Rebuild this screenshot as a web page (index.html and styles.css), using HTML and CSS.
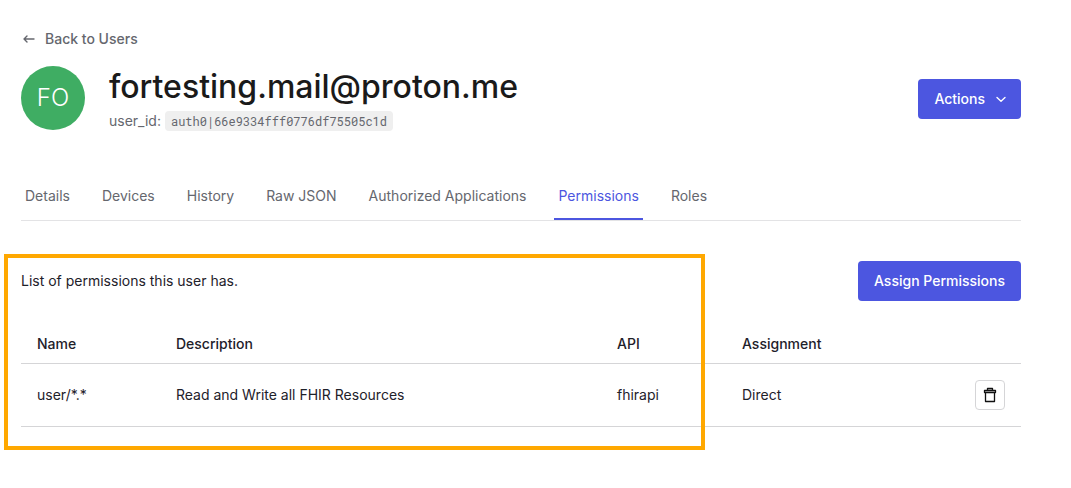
FILE: index.html
```html
<!DOCTYPE html>
<html lang="en">
<head>
<meta charset="utf-8">
<meta name="viewport" content="width=device-width, initial-scale=1">
<title>User permissions</title>
<link rel="stylesheet" href="styles.css">
</head>
<body>
<main class="page">
  <a class="back" href="#">
    <svg class="back-icon" width="16" height="16" viewBox="0 0 16 16" fill="none" stroke="currentColor" stroke-width="1.4" stroke-linecap="round" stroke-linejoin="round" aria-hidden="true"><path d="M13 8H3M6 5 3 8l3 3"/></svg>
    Back to Users
  </a>
  <header class="user">
    <div class="avatar">FO</div>
    <div class="identity">
      <h1 class="email">fortesting.mail@proton.me</h1>
      <div class="user-id">user_id: <code class="code">auth0|66e9334fff0776df75505c1d</code></div>
    </div>
    <button class="button button-menu" type="button">Actions
      <svg class="button-icon" width="16" height="16" viewBox="0 0 16 16" fill="none" stroke="currentColor" stroke-width="1.4" stroke-linecap="round" stroke-linejoin="round" aria-hidden="true"><path d="M4 6.500 8 10.200l4-3.700"/></svg>
    </button>
  </header>
  <nav class="tabs">
    <a class="tab" href="#">Details</a>
    <a class="tab" href="#">Devices</a>
    <a class="tab" href="#">History</a>
    <a class="tab" href="#">Raw JSON</a>
    <a class="tab" href="#">Authorized Applications</a>
    <a class="tab tab-active" href="#" aria-current="page">Permissions</a>
    <a class="tab" href="#">Roles</a>
  </nav>
  <section class="permissions">
    <div class="toolbar">
      <p class="intro">List of permissions this user has.</p>
      <button class="button" type="button">Assign Permissions</button>
    </div>
    <table class="table">
      <colgroup>
        <col class="col-name"><col class="col-description"><col class="col-api"><col class="col-assignment"><col class="col-action">
      </colgroup>
      <thead>
        <tr><th>Name</th><th>Description</th><th>API</th><th>Assignment</th><td></td></tr>
      </thead>
      <tbody>
        <tr>
          <td>user/*.*</td><td>Read and Write all FHIR Resources</td><td>fhirapi</td><td>Direct</td>
          <td class="action">
            <button class="delete" type="button" aria-label="Remove permission">
              <svg width="16" height="16" viewBox="0 0 16 16" fill="none" stroke="currentColor" stroke-width="1.3" stroke-linejoin="round" aria-hidden="true"><path d="M2.500 3.500h11v2h-11zM3.500 5.500v9h9v-9M5.500 3.500v-2h5v2"/></svg>
            </button>
          </td>
        </tr>
      </tbody>
    </table>
    <div class="highlight"></div>
  </section>
</main>
</body>
</html>
```
FILE: styles.css
```css
* {
  box-sizing: border-box;
}

body {
  margin: 0;
  background: #fff;
  color: #1e212a;
  font-family: Inter, "Liberation Sans", sans-serif;
  font-size: 14px;
  line-height: 20px;
}

.page {
  padding: 29px 50px 32px 21px;
}

.back {
  display: inline-flex;
  align-items: center;
  gap: 8px;
  color: #65676e;
  font-weight: 500;
  text-decoration: none;
}

.back-icon {
  display: block;
}

.user {
  display: flex;
  align-items: center;
  min-height: 66px;
  margin-top: 14px;
}

.avatar {
  display: grid;
  place-items: center;
  align-self: flex-start;
  flex: none;
  width: 64px;
  height: 64px;
  border-radius: 50%;
  background: #3fad63;
  color: #fff;
  font-size: 24px;
  font-weight: 300;
}

.identity {
  flex: 1;
  min-width: 0;
  padding-left: 24px;
}

.email {
  margin: 0 0 4px;
  color: #1a1a1a;
  font-size: 32px;
  font-weight: 500;
  line-height: 40px;
}

.user-id {
  display: flex;
  align-items: center;
  gap: 4px;
  color: #65676e;
}

.code {
  padding: 0 6px;
  border-radius: 4px;
  background: #efefef;
  font-family: "Roboto Mono", "DejaVu Sans Mono", "Liberation Mono", monospace;
  font-size: 12px;
}

.button {
  display: flex;
  align-items: center;
  gap: 8px;
  height: 40px;
  padding: 0 16px;
  border: 0;
  border-radius: 4px;
  background: #4c56e0;
  color: #fff;
  font: inherit;
  font-weight: 500;
}

.button-menu {
  padding-right: 12px;
}

.tabs {
  display: flex;
  gap: 24px;
  margin-top: 44px;
  border-bottom: 1px solid #e3e3e5;
}

.tab {
  padding: 10px 4px 12px;
  border-bottom: 2px solid transparent;
  color: #65676e;
  text-decoration: none;
}

.tab-active {
  border-color: #4c56e0;
  color: #4c56e0;
}

.permissions {
  position: relative;
  margin-top: 40px;
}

.toolbar {
  display: flex;
  align-items: center;
  justify-content: space-between;
}

.intro {
  margin: 0;
}

.table {
  width: 100%;
  margin-top: 24px;
  border-collapse: collapse;
  table-layout: fixed;
}

.col-name {
  width: 13.9%;
}

.col-description {
  width: 44.1%;
}

.col-api {
  width: 12.5%;
}

.col-assignment {
  width: 21.5%;
}

.col-action {
  width: 8%;
}

.table th,
.table td {
  padding: 8px 16px;
  border-bottom: 1px solid #d5d5d7;
  text-align: left;
}

.table thead {
  height: 38px;
}

.table th {
  font-weight: 500;
}

.table .action {
  padding: 16px;
}

.delete {
  display: grid;
  place-items: center;
  width: 30px;
  height: 30px;
  margin-left: auto;
  padding: 0;
  border: 1px solid #d5d5d7;
  border-radius: 4px;
  background: #fff;
  color: #111;
}

.highlight {
  position: absolute;
  top: -7px;
  bottom: -23px;
  left: -17px;
  right: 316px;
  border: 4px solid #ffa800;
  pointer-events: none;
}
```
